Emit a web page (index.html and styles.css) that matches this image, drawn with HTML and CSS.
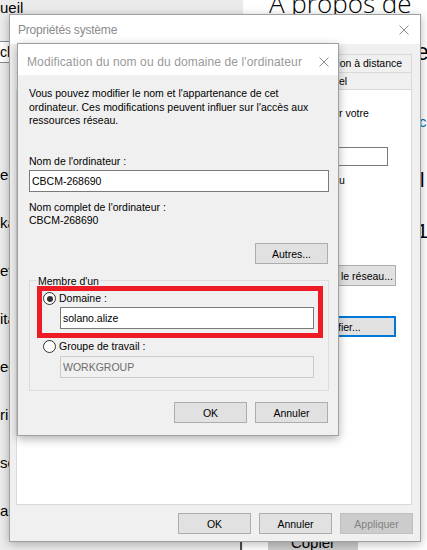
FILE: index.html
```html
<!DOCTYPE html>
<html lang="fr">
<head>
<meta charset="utf-8">
<title>Propriétés système</title>
<link rel="stylesheet" href="styles.css">
</head>
<body>
<div class="screen">
  <aside class="nav">
    <div class="nav-home">ueil</div>
    <div class="nav-search">ch</div>
    <ul class="nav-list">
      <li>eri</li>
      <li>ka</li>
      <li>ett</li>
      <li>ita</li>
      <li>ec</li>
      <li>ri</li>
      <li>se</li>
      <li>au</li>
    </ul>
    <div class="nav-scroll"></div>
  </aside>

  <main class="about">
    <h1 class="about-title">À propos de</h1>
    <div class="frag frag-e">e</div>
    <div class="frag frag-link">c</div>
    <div class="frag frag-l">l</div>
    <div class="frag frag-1">1</div>
    <button class="copy-btn">Copier</button>
  </main>

  <section class="win sysprops">
    <div class="titlebar">
      <span class="title">Propriétés système</span>
      <svg class="close" width="10" height="10" viewBox="0 0 10 10"><path d="M0.5 0.5L9.5 9.5M9.5 0.5L0.5 9.5" stroke="#8a8a8a" stroke-width="1" fill="none"/></svg>
    </div>
    <div class="body">
      <div class="tabs">
        <div class="tab-row">
          <div class="tab tab-fill"></div>
          <div class="tab tab-remote">Utilisation à distance</div>
        </div>
        <div class="tab-row tab-row-2">
          <div class="tab tab-fill"></div>
          <div class="tab tab-hw">Matériel</div>
        </div>
      </div>
      <div class="panel">
        <div class="panel-col">
          <div class="pline">r votre</div>
          <div class="pinput"></div>
          <div class="pline pline-u">u</div>
          <button class="btn pbtn">le réseau...</button>
          <button class="btn pbtn pbtn-default">fier...</button>
        </div>
      </div>
      <div class="btn-row">
        <button class="btn">OK</button>
        <button class="btn">Annuler</button>
        <button class="btn" disabled>Appliquer</button>
      </div>
    </div>
  </section>

  <section class="win rename">
    <div class="titlebar">
      <span class="title">Modification du nom ou du domaine de l'ordinateur</span>
      <svg class="close" width="10" height="10" viewBox="0 0 10 10"><path d="M0.5 0.5L9.5 9.5M9.5 0.5L0.5 9.5" stroke="#8a8a8a" stroke-width="1" fill="none"/></svg>
    </div>
    <div class="body">
      <p class="desc">Vous pouvez modifier le nom et l'appartenance de cet ordinateur. Ces modifications peuvent influer sur l'accès aux ressources réseau.</p>
      <div class="label label-name">Nom de l'ordinateur :</div>
      <input class="field field-name" type="text" value="CBCM-268690" readonly>
      <div class="label label-full">Nom complet de l'ordinateur :</div>
      <div class="label">CBCM-268690</div>
      <button class="btn btn-more">Autres...</button>
      <div class="group">
        <span class="legend">Membre d'un</span>
        <div class="highlight">
          <div class="radio-row">
            <span class="radio on"></span>
            <span>Domaine :</span>
          </div>
          <input class="field field-domain" type="text" value="solano.alize" readonly>
        </div>
        <div class="radio-row radio-row-2">
          <span class="radio"></span>
          <span>Groupe de travail :</span>
        </div>
        <input class="field field-wg" type="text" value="WORKGROUP" disabled>
      </div>
      <div class="btn-row">
        <button class="btn">OK</button>
        <button class="btn">Annuler</button>
      </div>
    </div>
  </section>
</div>
</body>
</html>
```

FILE: styles.css
```css
* {
  box-sizing: border-box;
  margin: 0;
  padding: 0;
}

html, body {
  width: 427px;
  height: 550px;
  overflow: hidden;
}

body {
  font-family: "Liberation Sans", Arial, sans-serif;
  background: #ffffff;
  color: #000000;
}

.screen {
  position: relative;
  width: 427px;
  height: 550px;
  display: flex;
  overflow: hidden;
}

/* Settings navigation (left pane) */
.nav {
  position: relative;
  width: 243px;
  flex: none;
  background: #ebebeb;
  font-size: 15px;
  overflow: hidden;
}

.nav-home {
  margin-top: -1px;
  height: 18px;
  line-height: 18px;
}

.nav-search {
  margin-top: 24px;
  width: 230px;
  height: 22px;
  border: 1px solid #8a8a8a;
  border-left: none;
  background: #ffffff;
  font-size: 14px;
  line-height: 20px;
}

.nav-list {
  list-style: none;
  margin-top: 88px;
}

.nav-list li {
  height: 48px;
  line-height: 48px;
}

.nav-scroll {
  position: absolute;
  right: 1px;
  bottom: 0;
  width: 2px;
  height: 8px;
  background: #4d4d4d;
}

/* Settings content (right pane) */
.about {
  flex: 1;
  padding-left: 26px;
  display: flex;
  flex-direction: column;
  align-items: flex-start;
}

.about-title {
  margin-top: -12px;
  font-family: "Open Sans", "Liberation Sans", sans-serif;
  font-weight: 300;
  font-size: 26px;
  line-height: 30px;
  white-space: nowrap;
}

.frag {
  white-space: nowrap;
}

.frag-e {
  margin: 20px 0 0 147px;
  font-size: 23px;
  line-height: 28px;
}

.frag-link {
  margin: 47px 0 0 150px;
  font-size: 15px;
  line-height: 18px;
  color: #0067c0;
}

.frag-l {
  margin: 37px 0 0 151px;
  font-size: 20px;
  line-height: 24px;
}

.frag-1 {
  margin: 27px 0 0 148px;
  font-size: 20px;
  line-height: 24px;
}

.copy-btn {
  margin: 291px 0 0 -1px;
  width: 90px;
  height: 32px;
  border: none;
  background: #cccccc;
  font-family: inherit;
  font-size: 15px;
  color: #000;
}

/* Dialog windows */
.win {
  position: absolute;
  display: flex;
  flex-direction: column;
  background: #f0f0f0;
  border: 1px solid #a0a0a0;
  font-size: 10.5px;
}

.sysprops {
  left: 9px;
  top: 14px;
  width: 412px;
  height: 528px;
  box-shadow: 0 2px 9px rgba(0, 0, 0, 0.28);
}

.rename {
  left: 17px;
  top: 43px;
  width: 322px;
  box-shadow: 0 3px 9px rgba(0, 0, 0, 0.3);
}

.titlebar {
  flex: none;
  display: flex;
  align-items: center;
  justify-content: space-between;
  background: #ffffff;
  font-size: 12px;
  white-space: nowrap;
}

.sysprops .titlebar {
  height: 29px;
  padding: 1px 11px 0 8px;
  color: #8a8a8a;
  letter-spacing: -0.2px;
}

.rename .titlebar {
  height: 31px;
  padding: 4px 9px 0 9px;
  color: #999999;
  letter-spacing: 0.12px;
}

.close {
  display: block;
  flex: none;
}

/* Outer dialog body */
.sysprops .body {
  flex: 1;
  display: flex;
  flex-direction: column;
  padding: 10px 7px 7px 6px;
}

.tabs {
  display: flex;
  flex-direction: column;
  margin-right: 1px;
}

.tab-row {
  display: flex;
  height: 18px;
}

.tab-row-2 {
  height: 17px;
}

.tab {
  border: 1px solid #d9d9d9;
  border-bottom: none;
  border-left: none;
  background: #f0f0f0;
  text-align: center;
  line-height: 16px;
  white-space: nowrap;
  overflow: hidden;
}

.tab-fill {
  flex: 1;
}

.tab-remote {
  width: 115px;
  flex: none;
}

.tab-hw {
  width: 166px;
  flex: none;
}

.panel {
  height: 416px;
  margin-right: 1px;
  background: #ffffff;
  border: 1px solid #d9d9d9;
}

.panel-col {
  margin-left: 283px;
  width: 96px;
  padding-top: 17px;
  display: flex;
  flex-direction: column;
}

.pline {
  padding-left: 39px;
  line-height: 13px;
  white-space: nowrap;
}

.pinput {
  margin-top: 27px;
  width: 88px;
  height: 19px;
  border: 1px solid #7a7a7a;
  background: #ffffff;
}

.pline-u {
  margin-top: 8px;
}

.btn {
  width: 73px;
  height: 21px;
  padding: 0;
  border: 1px solid #adadad;
  background: #e1e1e1;
  font-family: inherit;
  font-size: 10.5px;
  color: #000000;
  white-space: nowrap;
}

.btn:disabled {
  background: #cccccc;
  border-color: #bfbfbf;
  color: #838383;
}

.pbtn {
  width: 96px;
  margin-top: 78px;
  text-align: left;
  padding-left: 40px;
}

.pbtn-default {
  margin-top: 30px;
  border: 2px solid #0078d7;
  padding-left: 36px;
}

.btn-row {
  display: flex;
  justify-content: flex-end;
  gap: 8px;
}

.sysprops .btn-row {
  margin-top: 8px;
}

/* Inner dialog body */
.rename .body {
  display: flex;
  flex-direction: column;
  padding: 12px 9px 12px 11px;
}

.desc {
  line-height: 13.5px;
}

.label {
  line-height: 13px;
  white-space: nowrap;
}

.label-name {
  margin-top: 27px;
}

.label-full {
  margin-top: 9px;
}

.field {
  display: block;
  height: 22px;
  padding: 0 2px;
  border: 1px solid #7a7a7a;
  background: #ffffff;
  font-family: inherit;
  font-size: 10.5px;
  color: #000000;
  outline: none;
}

.field-name {
  margin-top: 2.5px;
  width: 100%;
}

.btn-more {
  align-self: flex-end;
  margin: 16px 1px 0 0;
}

.group {
  margin-top: 16px;
  border: 1px solid #dcdcdc;
  padding: 0 5px 12px 7px;
  display: flex;
  flex-direction: column;
}

.legend {
  align-self: flex-start;
  margin: -6px 0 -2px 0;
  padding: 0 1px;
  background: #f0f0f0;
  line-height: 13px;
}

.highlight {
  border: 5px solid #ed1c24;
  padding: 1px 4px 4px 1px;
  display: flex;
  flex-direction: column;
}

.radio-row {
  display: flex;
  align-items: center;
  gap: 3px;
  height: 13px;
  line-height: 13px;
  white-space: nowrap;
}

.radio-row-2 {
  margin-top: 2px;
  padding-left: 6px;
}

.radio {
  width: 13px;
  height: 13px;
  flex: none;
  border: 1px solid #333333;
  border-radius: 50%;
  background: #ffffff;
  display: grid;
  place-items: center;
}

.radio.on::after {
  content: "";
  width: 6px;
  height: 6px;
  border-radius: 50%;
  background: #333333;
}

.field-domain {
  margin-top: 2px;
  margin-left: 17px;
}

.field-wg {
  margin: 3px 9px 0 23px;
  border-color: #cccccc;
  background: #f0f0f0;
  color: #6d6d6d;
}

.rename .btn-row {
  margin: 11px 1px 0 0;
}
```
